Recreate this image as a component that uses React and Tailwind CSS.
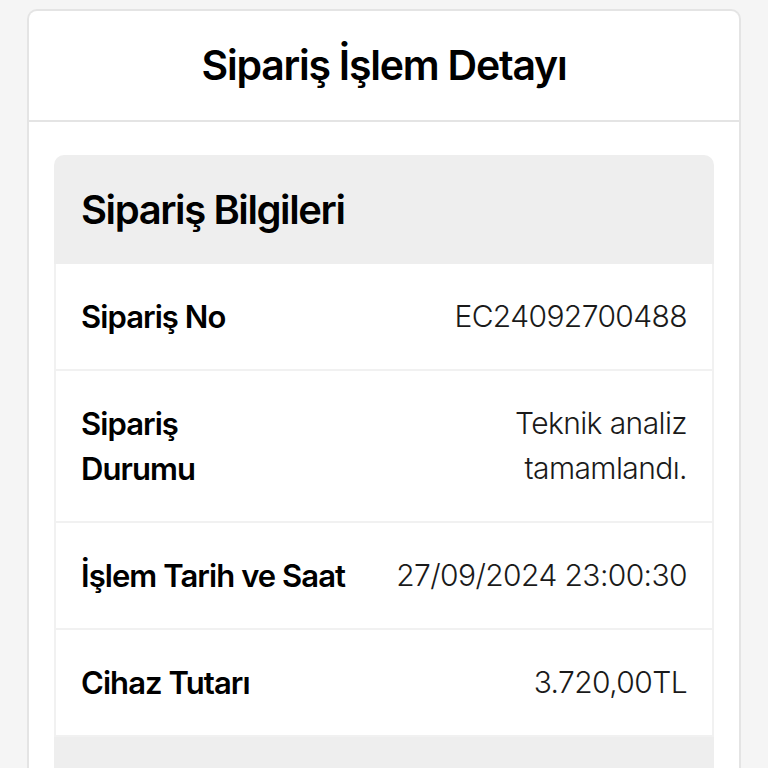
const rows = [
  { label: ['Sipariş No'], value: ['EC24092700488'] },
  { label: ['Sipariş', 'Durumu'], value: ['Teknik analiz', 'tamamlandı.'] },
  { label: ['İşlem Tarih ve Saat'], value: ['27/09/2024 23:00:30'] },
  { label: ['Cihaz Tutarı'], value: ['3.720,00TL'] },
];

export default function App() {
  return (
    <div className="min-h-screen bg-[#f5f5f5] px-[27px] pt-[9px] font-['Inter',sans-serif] text-black">
      <div className="rounded-t-[10px] border-2 border-b-0 border-[#e4e4e4] bg-white">
        {/* header */}
        <div className="flex h-[111px] items-center justify-center border-b-2 border-[#e4e4e4]">
          <h1 className="text-[41px] font-semibold tracking-[-0.03em]">Sipariş İşlem Detayı</h1>
        </div>

        <div className="px-[25px] pt-[33px]">
          <div className="overflow-hidden rounded-t-[10px] bg-[#eeeeee]">
            <div className="flex h-[109px] items-center px-[27px]">
              <h2 className="text-[40px] font-semibold tracking-[-0.035em]">Sipariş Bilgileri</h2>
            </div>

            <div className="flex flex-col gap-[2px] bg-[#f1f1f1] px-[2px]">
              {rows.map((row, i) => (
                <div key={i} className="flex items-center justify-between gap-4 bg-white px-[25px] py-[30px] leading-[45px]">
                  <div className="text-[31px] font-semibold tracking-[-0.03em]">
                    {row.label.map(l => <div key={l}>{l}</div>)}
                  </div>
                  <div className="text-right text-[30px] font-light text-[#1a1a1a] tracking-[-0.02em]">
                    {row.value.map(v => <div key={v}>{v}</div>)}
                  </div>
                </div>
              ))}
            </div>

            <div className="h-[109px] border-t-2 border-[#f1f1f1]" />
          </div>
        </div>
      </div>
    </div>
  );
}
